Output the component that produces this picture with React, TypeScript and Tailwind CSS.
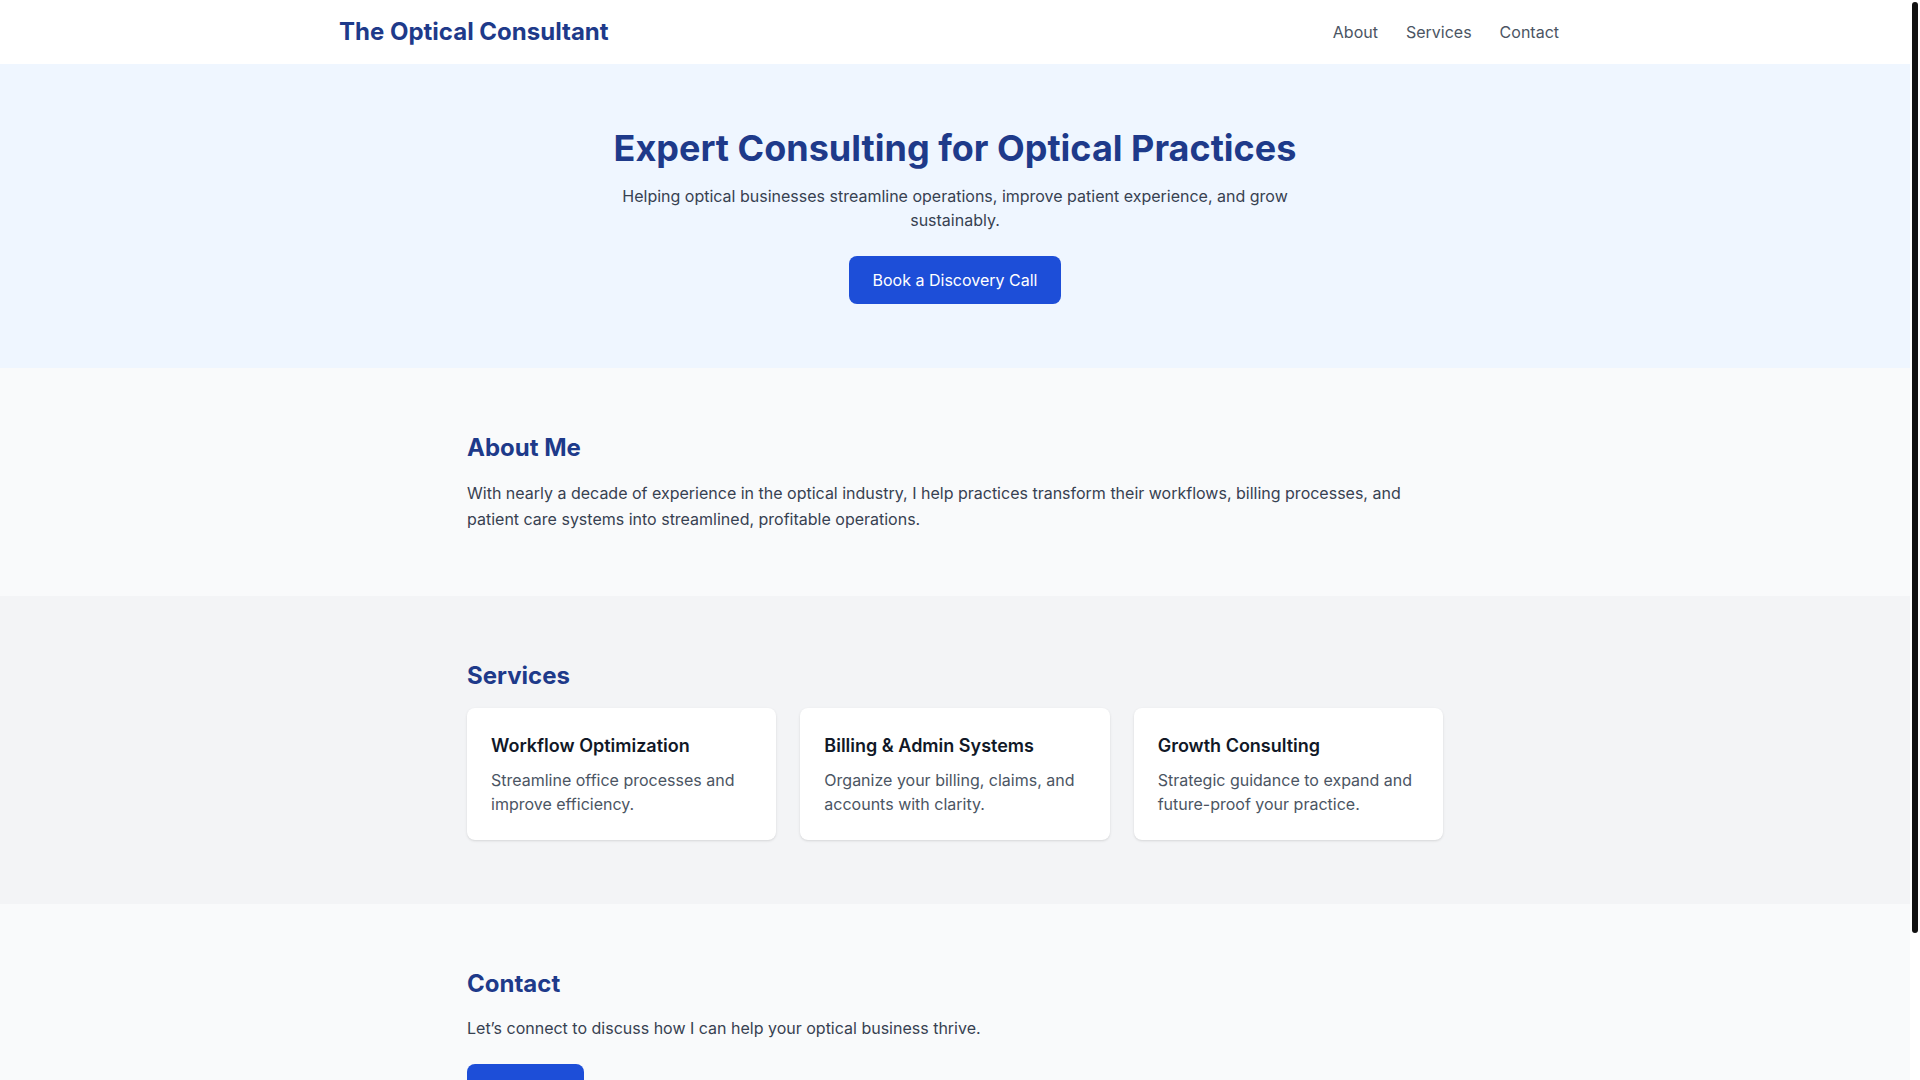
import React from "react";

const services = [
    {
        title: "Workflow Optimization",
        text: "Streamline office processes and improve efficiency.",
    },
    {
        title: "Billing & Admin Systems",
        text: "Organize your billing, claims, and accounts with clarity.",
    },
    {
        title: "Growth Consulting",
        text: "Strategic guidance to expand and future-proof your practice.",
    },
];

// the reference shows the window scrollbar, so keep its 10px lane free and draw the thumb
const ScrollBar = () => (
    <div className="fixed top-0 right-0 h-screen w-[10px] bg-white">
        <div className="mt-[2px] ml-[2px] w-[6px] h-[931px] rounded-full bg-[#111111]"></div>
    </div>
);

const App = () => {
    return (
        <div className="bg-white font-['Inter',sans-serif] text-[#374151]">
            <div className="mr-[10px] bg-[#f9fafb]">
                {/* Header */}
                <header className="bg-white">
                    <div className="max-w-7xl mx-auto pl-6 pr-9 h-16 flex items-center justify-between">
                        <span className="text-2xl font-bold text-[#1e3a8a]">The Optical Consultant</span>
                        <nav className="flex items-center gap-7 text-[#4b5563]">
                            <a href="#about">About</a>
                            <a href="#services">Services</a>
                            <a href="#contact">Contact</a>
                        </nav>
                    </div>
                </header>

                {/* Hero */}
                <section className="bg-[#eff6ff] py-16 text-center">
                    <div className="max-w-5xl mx-auto px-6">
                        <h1 className="text-4xl font-bold text-[#1e3a8a] mb-4">
                            Expert Consulting for Optical Practices
                        </h1>
                        <p className="max-w-2xl mx-auto mb-6">
                            Helping optical businesses streamline operations, improve patient experience, and grow
                            sustainably.
                        </p>
                        <a href="#contact" className="inline-block bg-[#1d4ed8] text-white px-6 py-3 rounded-lg">
                            Book a Discovery Call
                        </a>
                    </div>
                </section>

                {/* About */}
                <section id="about" className="bg-[#f9fafb] py-16">
                    <div className="max-w-5xl mx-auto px-6">
                        <h2 className="text-2xl font-bold text-[#1e3a8a] mb-4">About Me</h2>
                        <p className="leading-relaxed">
                            With nearly a decade of experience in the optical industry, I help practices transform
                            their workflows, billing processes, and patient care systems into streamlined, profitable
                            operations.
                        </p>
                    </div>
                </section>

                {/* Services */}
                <section id="services" className="bg-[#f3f4f6] py-16">
                    <div className="max-w-5xl mx-auto px-6">
                        <h2 className="text-2xl font-bold text-[#1e3a8a] mb-4">Services</h2>
                        <div className="grid grid-cols-3 gap-6">
                            {services.map((service) => (
                                <div key={service.title} className="bg-white rounded-lg shadow-sm p-6">
                                    <h3 className="text-lg font-semibold text-[#111827] mb-2">{service.title}</h3>
                                    <p className="text-[#4b5563]">{service.text}</p>
                                </div>
                            ))}
                        </div>
                    </div>
                </section>

                {/* Contact */}
                <section id="contact" className="bg-[#f9fafb] py-16">
                    <div className="max-w-5xl mx-auto px-6">
                        <h2 className="text-2xl font-bold text-[#1e3a8a] mb-4">Contact</h2>
                        <p className="mb-6">Let’s connect to discuss how I can help your optical business thrive.</p>
                        <a
                            href="mailto:hello@example.com"
                            className="inline-block bg-[#1d4ed8] text-white px-6 py-3 rounded-lg"
                        >
                            Email Me
                        </a>
                    </div>
                </section>

                {/* Footer */}
                <footer className="bg-white py-6 text-center text-sm text-[#6b7280]">
                    © 2024 The Optical Consultant. All rights reserved.
                </footer>
            </div>
            <ScrollBar />
        </div>
    );
};

export default App;
